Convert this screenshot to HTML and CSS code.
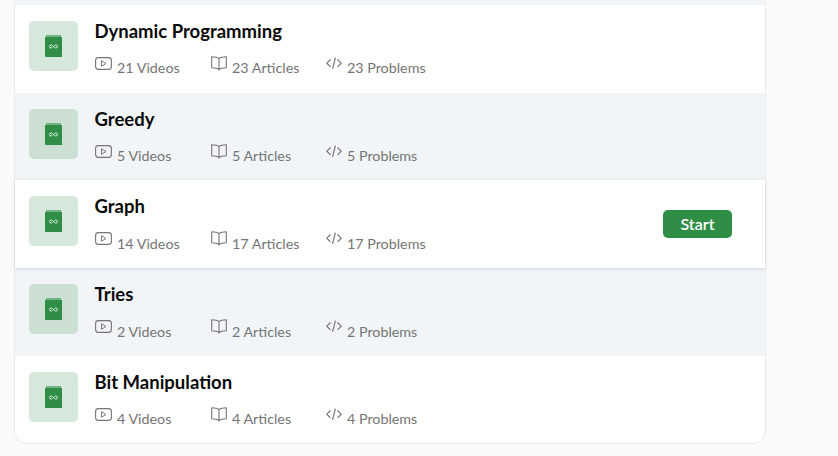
FILE: index.html
```html
<!DOCTYPE html>
<html lang="en">
<head>
<meta charset="utf-8">
<title>Course topics</title>
<link rel="stylesheet" href="styles.css">
</head>
<body>
<svg class="defs" width="0" height="0" aria-hidden="true">
  <symbol id="i-book" viewBox="0 0 17 22">
    <path d="M1 0h15v2H1z" fill="#6fb485"/>
    <path d="M0 2h17v20H1a1 1 0 0 1-1-1z" fill="#2f8d46"/>
    <path d="M8.500 11.500c-1-1.100-1.700-1.500-2.400-1.500a1.500 1.500 0 0 0 0 3c.7 0 1.400-.4 2.400-1.500s1.700-1.500 2.400-1.500a1.500 1.500 0 0 1 0 3c-.7 0-1.400-.4-2.400-1.500z" fill="none" stroke="#e6f3ea" stroke-width="1"/>
  </symbol>
  <symbol id="i-video" viewBox="0 0 17 13">
    <rect x=".6" y=".6" width="15.800" height="11.800" rx="2.800" fill="none" stroke="#757575" stroke-width="1.100"/>
    <path d="M6.500 3.800v5.400l4.500-2.700z" fill="none" stroke="#757575" stroke-width="1" stroke-linejoin="round"/>
  </symbol>
  <symbol id="i-open" viewBox="0 0 16 15">
    <path d="M8 2.600C6.500 1.300 4 .8.700.8v10.900c3.300 0 5.800.5 7.300 1.800 1.500-1.300 4-1.800 7.300-1.800V.8C12 .8 9.500 1.300 8 2.600zm0 0v12" fill="none" stroke="#757575" stroke-width="1.100" stroke-linejoin="round"/>
  </symbol>
  <symbol id="i-code" viewBox="0 0 16 13">
    <path d="M4.500 2.500.8 6.200l3.700 3.700M11.500 2.500l3.700 3.700-3.700 3.700M9.400.6 6.600 11.800" fill="none" stroke="#757575" stroke-width="1.200"/>
  </symbol>
</svg>
<main class="card">
  <div class="strip"></div>
  <section class="row">
    <div class="thumb"><svg class="book"><use href="#i-book"/></svg></div>
    <div class="info">
      <h3 class="title">Dynamic Programming</h3>
      <div class="meta">
        <span class="item"><svg class="ic-video"><use href="#i-video"/></svg><span class="label">21 Videos</span></span>
        <span class="item"><svg class="ic-open"><use href="#i-open"/></svg><span class="label">23 Articles</span></span>
        <span class="item"><svg class="ic-code"><use href="#i-code"/></svg><span class="label">23 Problems</span></span>
      </div>
    </div>
  </section>
  <section class="row alt thumb-dark">
    <div class="thumb"><svg class="book"><use href="#i-book"/></svg></div>
    <div class="info">
      <h3 class="title">Greedy</h3>
      <div class="meta">
        <span class="item"><svg class="ic-video"><use href="#i-video"/></svg><span class="label">5 Videos</span></span>
        <span class="item"><svg class="ic-open"><use href="#i-open"/></svg><span class="label">5 Articles</span></span>
        <span class="item"><svg class="ic-code"><use href="#i-code"/></svg><span class="label">5 Problems</span></span>
      </div>
    </div>
  </section>
  <section class="row hover">
    <div class="thumb"><svg class="book"><use href="#i-book"/></svg></div>
    <div class="info">
      <h3 class="title">Graph</h3>
      <div class="meta">
        <span class="item"><svg class="ic-video"><use href="#i-video"/></svg><span class="label">14 Videos</span></span>
        <span class="item"><svg class="ic-open"><use href="#i-open"/></svg><span class="label">17 Articles</span></span>
        <span class="item"><svg class="ic-code"><use href="#i-code"/></svg><span class="label">17 Problems</span></span>
      </div>
    </div>
    <button class="start" type="button">Start</button>
  </section>
  <section class="row alt thumb-dark">
    <div class="thumb"><svg class="book"><use href="#i-book"/></svg></div>
    <div class="info">
      <h3 class="title">Tries</h3>
      <div class="meta">
        <span class="item"><svg class="ic-video"><use href="#i-video"/></svg><span class="label">2 Videos</span></span>
        <span class="item"><svg class="ic-open"><use href="#i-open"/></svg><span class="label">2 Articles</span></span>
        <span class="item"><svg class="ic-code"><use href="#i-code"/></svg><span class="label">2 Problems</span></span>
      </div>
    </div>
  </section>
  <section class="row last">
    <div class="thumb"><svg class="book"><use href="#i-book"/></svg></div>
    <div class="info">
      <h3 class="title">Bit Manipulation</h3>
      <div class="meta">
        <span class="item"><svg class="ic-video"><use href="#i-video"/></svg><span class="label">4 Videos</span></span>
        <span class="item"><svg class="ic-open"><use href="#i-open"/></svg><span class="label">4 Articles</span></span>
        <span class="item"><svg class="ic-code"><use href="#i-code"/></svg><span class="label">4 Problems</span></span>
      </div>
    </div>
  </section>
</main>
</body>
</html>
```

FILE: styles.css
```css
* { box-sizing: border-box; }
html, body { margin: 0; height: 456px; overflow: hidden; }
body {
  background: #fafafa;
  font-family: "Lato", "Liberation Sans", sans-serif;
  padding-left: 14px;
}
.defs { position: absolute; }
.card {
  width: 752px;
  background: #fff;
  border: 1px solid #e9ecef;
  border-top: 0;
  border-radius: 0 0 14px 14px;
}
.strip { height: 4.750px; background: #f1f5f8; }
.row {
  display: flex;
  align-items: flex-start;
  height: 87.750px;
  padding: 16px 33px 0 14px;
  background: #fff;
}
.row.alt { background: #f1f5f8; }
.row.hover { position: relative; box-shadow: 0 1px 4px rgba(30, 40, 60, .13); }
.row.last { height: 87.250px; border-radius: 0 0 13px 13px; }
.thumb {
  flex: none;
  width: 49px;
  height: 50px;
  display: flex;
  align-items: center;
  justify-content: center;
  background: #d6e8dc;
  border-radius: 5px;
}
.thumb-dark .thumb { background: #cbe0d2; }
.book { width: 17px; height: 22px; }
.info { flex: 1; margin-left: 17px; }
.title {
  margin: -1px 0 0 -0.500px;
  font-size: 18.500px;
  line-height: 22px;
  font-weight: 700;
  color: #0a0a0a;
}
.meta {
  display: grid;
  grid-template-columns: 116px 115px 1fr;
  margin-top: 14px;
}
.item { display: flex; align-items: flex-start; height: 20px; }
.label {
  margin-top: 3.500px;
  margin-left: 5px;
  font-size: 14.300px;
  line-height: 18px;
  color: #757575;
}
.ic-video { width: 17px; height: 13px; margin-top: 1px; }
.ic-open { width: 16px; height: 15px; margin-top: 0; }
.ic-code { width: 16px; height: 13px; margin-top: 1px; }
.start {
  align-self: flex-start;
  margin-top: 14px;
  width: 69px;
  height: 28px;
  border: 0;
  border-radius: 5px;
  background: #2f8d46;
  color: #fff;
  font: 600 16px/28px "Lato", "Liberation Sans", sans-serif;
  padding: 0;
}
```
